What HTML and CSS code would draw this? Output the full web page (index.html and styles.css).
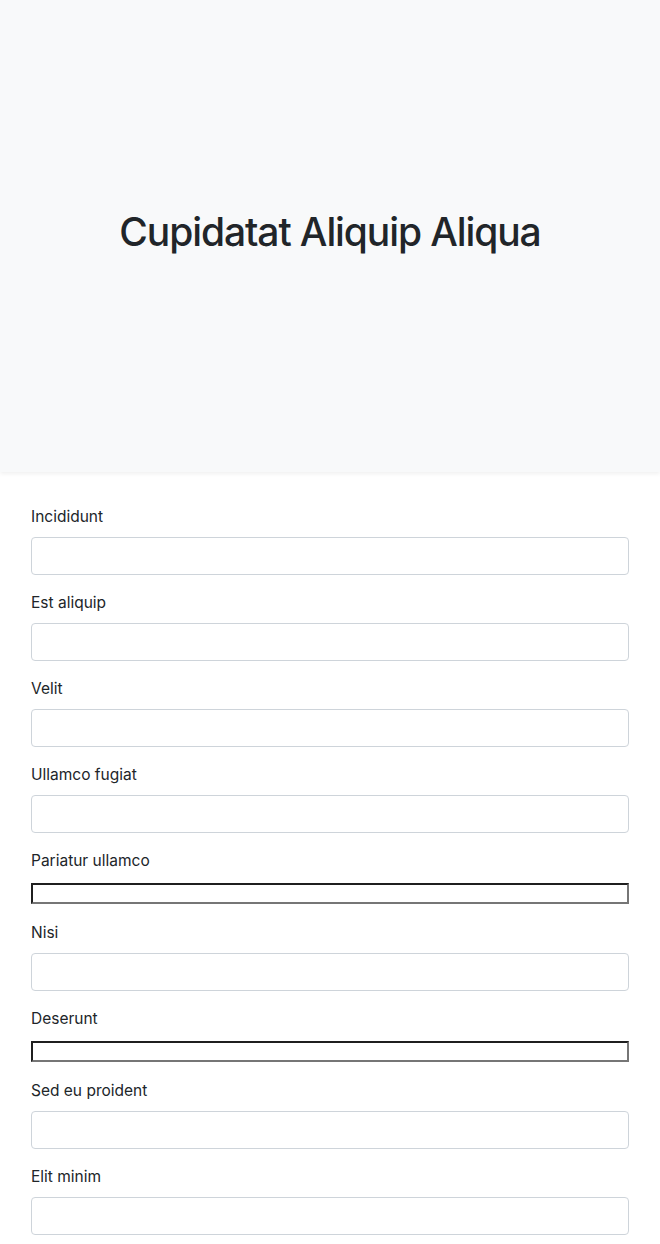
FILE: index.html
```
<!DOCTYPE html>
<html lang="en">
<head>
<meta charset="utf-8">
<title>Cupidatat Aliquip Aliqua</title>
<link rel="stylesheet" href="styles.css">
</head>
<body>
<header class="hero">
  <h1 class="hero-title">Cupidatat Aliquip Aliqua</h1>
</header>
<main class="form-wrap">
  <form class="form">
    <div class="field"><label class="label" for="f1">Incididunt</label><input class="control" id="f1" type="text"></div>
    <div class="field"><label class="label" for="f2">Est aliquip</label><input class="control" id="f2" type="text"></div>
    <div class="field"><label class="label" for="f3">Velit</label><input class="control" id="f3" type="text"></div>
    <div class="field"><label class="label" for="f4">Ullamco fugiat</label><input class="control" id="f4" type="text"></div>
    <div class="field"><label class="label" for="f5">Pariatur ullamco</label><input class="plain" id="f5" type="text"></div>
    <div class="field"><label class="label" for="f6">Nisi</label><input class="control" id="f6" type="text"></div>
    <div class="field"><label class="label" for="f7">Deserunt</label><input class="plain" id="f7" type="text"></div>
    <div class="field"><label class="label" for="f8">Sed eu proident</label><input class="control" id="f8" type="text"></div>
    <div class="field"><label class="label" for="f9">Elit minim</label><input class="control" id="f9" type="text"></div>
  </form>
</main>
</body>
</html>
```
FILE: styles.css
```
*, *::before, *::after { box-sizing: border-box; }
html, body { margin: 0; padding: 0; }
body {
  font-family: Inter, "Liberation Sans", sans-serif;
  font-size: 16px;
  line-height: 1.5;
  color: #212529;
  background: #fff;
}
.hero {
  height: 472px;
  padding-bottom: 7px;
  background: #f8f9fa;
  display: flex;
  align-items: center;
  justify-content: center;
  box-shadow: 0 2px 4px rgba(0,0,0,0.06);
}
.hero-title {
  margin: 0;
  font-size: 39px;
  font-weight: 500;
  line-height: 1.2;
  letter-spacing: -1.1px;
}
.form-wrap { padding: 33px 31px 0; }
.form { display: flex; flex-direction: column; gap: 16px; }
.field { display: flex; flex-direction: column; }
.label { display: block; margin-bottom: 8px; line-height: 24px; font-size: 15.5px; }
.control {
  display: block;
  width: 100%;
  height: 38px;
  padding: 6px 12px;
  font: inherit;
  color: #212529;
  background: #fff;
  border: 1px solid #ced4da;
  border-radius: 4px;
}
.plain {
  display: block;
  width: 100%;
  height: 21px;
  margin: 2px 0 1px;
  padding: 1px 2px;
  font-size: 13.33px;
  background: #fff;
  border-width: 2px;
  border-style: solid;
  border-top-color: #1f1f1f;
  border-left-color: #1f1f1f;
  border-right-color: #767676;
  border-bottom-color: #767676;
  border-radius: 0;
}
```
